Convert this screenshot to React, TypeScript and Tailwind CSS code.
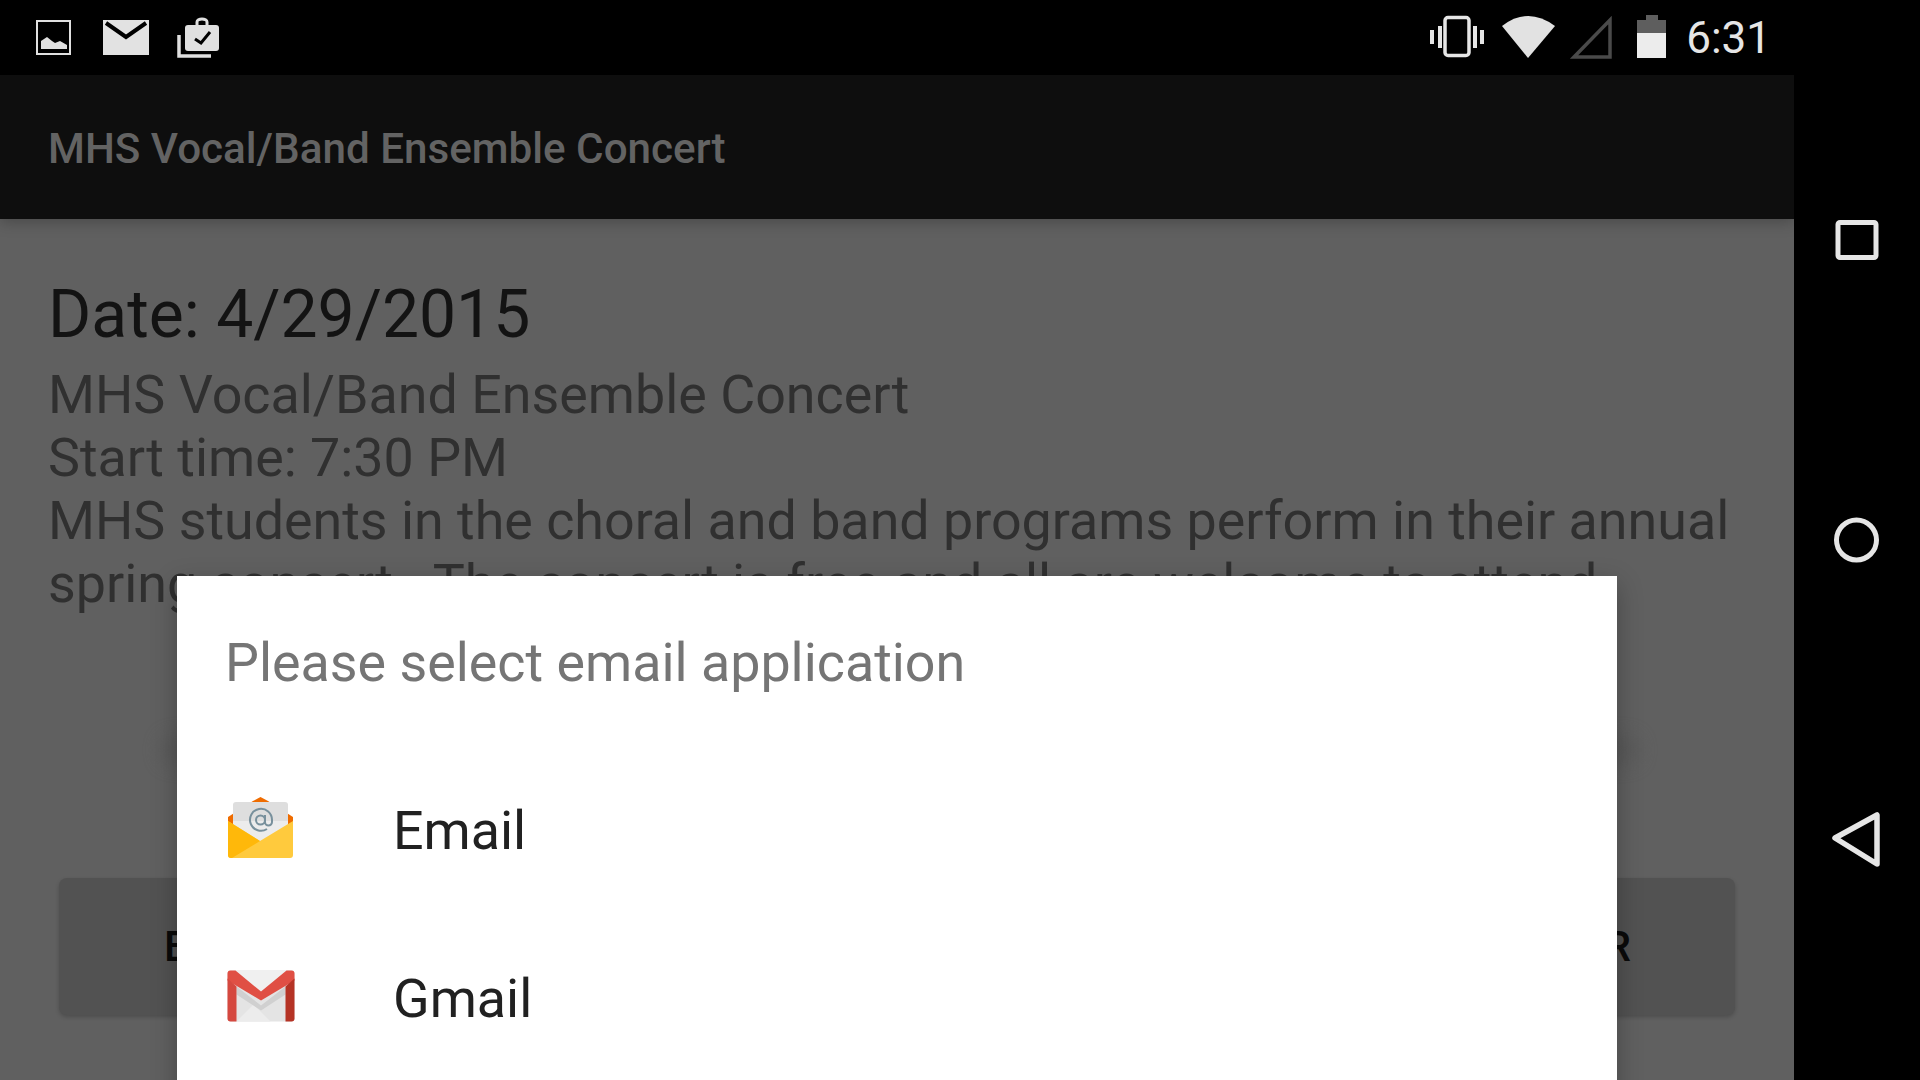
export default function App() {
  return (
    <div className="relative flex h-[1080px] w-[1920px] overflow-hidden bg-black font-['Roboto',sans-serif]">
      <div className="flex w-[1794px] flex-col">
        <header className="flex h-[75px] items-center justify-between bg-black">
          <div className="relative h-[75px] w-[300px]">
            <svg width="300" height="75" viewBox="0 0 300 75" className="absolute left-0 top-0">
              <rect x="37" y="21" width="33" height="33" fill="none" stroke="#e0e0e0" strokeWidth="2" />
              <rect x="40" y="24" width="27" height="27" fill="#000" />
              <path d="M41 49 V41 L47 37 L52 41 L55 43 L60 41 L67 45 V49 Z" fill="#e0e0e0" />
              <rect x="103" y="20" width="46" height="35" fill="#e2e2e2" />
              <path d="M106 23 L126 37 L146 23" fill="none" stroke="#000" strokeWidth="4" />
              <path d="M179 35 V56 H211" fill="none" stroke="#e0e0e0" strokeWidth="3.5" />
              <rect x="185" y="25" width="34" height="26" rx="3" fill="#e0e0e0" />
              <path d="M197 25 V22 A5 3 0 0 1 207 22 V25" fill="none" stroke="#e0e0e0" strokeWidth="3" />
              <path d="M195 39 L201 43 L210 32" fill="none" stroke="#000" strokeWidth="3" />
            </svg>
          </div>
          <div className="flex items-center pr-[23px]">
            <svg width="260" height="75" viewBox="1420 0 260 75">
              <rect x="1445" y="17.5" width="24" height="38" rx="3" fill="none" stroke="#e6e6e6" strokeWidth="3.5" />
              <path d="M1430 30 h4 v14 h-4 Z M1438 26 h4 v22 h-4 Z M1473 26 h4 v22 h-4 Z M1480 30 h4 v14 h-4 Z" fill="#e6e6e6" />
              <path d="M1502 26 Q1528 6 1555 26 L1528 58 Z" fill="#e2e2e2" />
              <path d="M1574 57 L1610 20 V57 Z" fill="none" stroke="#4a4a4a" strokeWidth="3.5" />
              <path d="M1637 20 H1646 V15 H1658 V20 H1666 V33 H1637 Z" fill="#5e5e5e" />
              <rect x="1637" y="33" width="29" height="25" fill="#ececec" />
            </svg>
            <span className="ml-[6px] text-[44px] leading-none text-[#e6e6e6]">6:31</span>
          </div>
        </header>
        <div className="relative z-10 flex h-[144px] items-center bg-[#0e0e0e] pl-[48px] pt-[4px] shadow-[0_3px_14px_rgba(0,0,0,0.25)]">
          <h1 className="text-[42.2px] font-medium leading-none text-[#636363]">MHS Vocal/Band Ensemble Concert</h1>
        </div>
        <main className="flex flex-1 flex-col bg-[#606060] pl-[48px] pr-[49px] pt-[61px]">
          <p className="text-[66px] leading-[70px] text-[#131313]">Date: 4/29/2015</p>
          <p className="mt-[13px] text-[53.8px] leading-[63px] text-[#303030]">
            MHS Vocal/Band Ensemble Concert
            <br />
            Start time: 7:30 PM
            <br />
            MHS students in the choral and band programs perform in their annual spring concert.&nbsp; The concert is free and all are welcome to attend.
          </p>
          <div className="mt-[263px] ml-[11px] flex h-[137px] w-[1676px] items-center justify-between rounded-[8px] bg-[#525252] pl-[105px] pr-[104px] text-[42px] font-medium text-[#0a0a0a] shadow-[0_2px_4px_rgba(0,0,0,0.2)]">
            <span>E</span>
            <span>R</span>
          </div>
        </main>
      </div>
      <nav className="flex w-[126px] flex-col items-center bg-black pt-[220px] pl-[4px]">
        <svg width="60" height="40" viewBox="0 0 60 40" className="mb-[256px]">
          <rect x="9" y="2.5" width="38" height="35" rx="2" fill="none" stroke="#e6e6e6" strokeWidth="5" />
        </svg>
        <svg width="60" height="48" viewBox="0 0 60 48" className="mb-[246px]">
          <circle cx="27.5" cy="24" r="20" fill="none" stroke="#e6e6e6" strokeWidth="5" />
        </svg>
        <svg width="60" height="60" viewBox="0 0 60 60">
          <path d="M6 28 L48 5 V54 Z" fill="none" stroke="#e6e6e6" strokeWidth="5.5" strokeLinejoin="round" />
        </svg>
      </nav>
      <div className="absolute left-[160px] top-[735px] h-[30px] w-[1480px] rounded-full bg-[#5a5a5a] blur-[8px]" />
      <section className="absolute left-[177px] top-[576px] h-[600px] w-[1440px] bg-white shadow-[0_8px_24px_rgba(0,0,0,0.28)]">
        <h2 className="pl-[48px] pt-[55px] text-[53.8px] leading-[63px] text-[#757575]">Please select email application</h2>
        <ul className="mt-[53px]">
          <li className="flex h-[168px] items-center">
            <svg width="216" height="70" viewBox="0 0 216 70" className="shrink-0">
              <g transform="translate(51 1)">
                <path d="M0 20 L25 4 L32.500 0 L40 4 L65 20 V40 H0 Z" fill="#ef6c00" />
                <rect x="5" y="5" width="55" height="44" rx="3" fill="#dedede" />
                <path d="M5 24 H60 V49 H5 Z" fill="#ececec" />
                <path d="M39 32 A11 11 0 1 1 44 23 V25 A3.5 3.500 0 0 1 37 25 V18 M37 23 A4.5 4.5 0 1 1 28 23 A4.5 4.5 0 1 1 37 23" fill="none" stroke="#78909c" strokeWidth="2" />
                <path d="M0 24 L32 44 L65 24 V58 Q65 61 62 61 H3 Q0 61 0 58 Z" fill="#ffca3d" />
                <path d="M0 24 L32 44 L4 61 H3 Q0 61 0 58 Z" fill="#ffb80a" />
              </g>
            </svg>
            <span className="text-[53.8px] leading-none text-[#212121]">Email</span>
          </li>
          <li className="flex h-[168px] items-center">
            <svg width="216" height="60" viewBox="0 0 216 60" className="shrink-0">
              <g transform="translate(50.5 1.5)">
                <rect x="0" y="0" width="67" height="51" rx="3" fill="#e4e4e4" />
                <path d="M0 0 H67 L33.500 27 Z" fill="#f0f0f0" />
                <path d="M9 51 L26 34 L43 51 Z" fill="#ececec" />
                <path d="M9 16 L33.500 35 L58 16 V24 L33.500 40 L9 24 Z" fill="#d0d0d0" />
                <path d="M0 3 Q0 0 3 0 H8 L33.500 21 L59 0 H64 Q67 0 67 3 V10 L33.500 30 L0 10 Z" fill="#e04f44" />
                <path d="M0 8 L9 16 V51 H3 Q0 51 0 48 Z" fill="#d5483f" />
                <path d="M67 8 L58 16 V51 H64 Q67 51 67 48 Z" fill="#b53325" />
              </g>
            </svg>
            <span className="text-[53.8px] leading-none text-[#212121]">Gmail</span>
          </li>
        </ul>
      </section>
    </div>
  );
}
